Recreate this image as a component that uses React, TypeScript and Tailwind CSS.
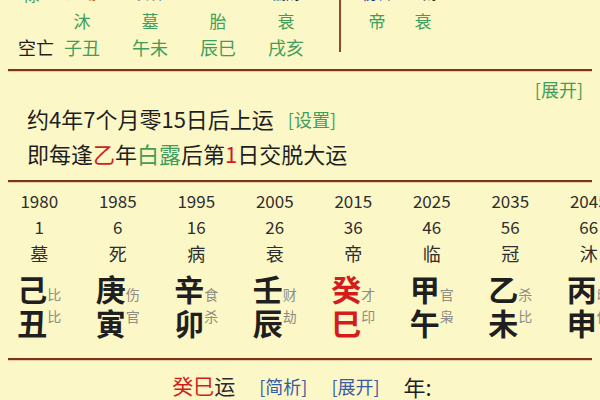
import React from "react";

// ─── Data ─────────────────────────────────────────────────────────────────────

type TopCol = { god: string; godColor: string; star: string; kong: string };

const leftCols: TopCol[] = [
  { god: "比劫", godColor: "text-[#c8782a]", star: "沐", kong: "子丑" },
  { god: "食神", godColor: "text-[#2b3f9e]", star: "墓", kong: "午未" },
  { god: "", godColor: "", star: "胎", kong: "辰巳" },
  { god: "偏财", godColor: "text-[#2a2a2a]", star: "衰", kong: "戌亥" },
];

const rightCols = [
  { god: "伤官", godColor: "text-[#2b3f9e]", star: "帝" },
  { god: "正财", godColor: "text-[#2a2a2a]", star: "衰" },
];

type Luck = {
  year: string;
  age: string;
  stage: string;
  stem: string;
  branch: string;
  stemGod: string;
  branchGod: string;
  hot?: boolean;
};

const lucks: Luck[] = [
  { year: "1980", age: "1", stage: "墓", stem: "己", branch: "丑", stemGod: "比", branchGod: "比" },
  { year: "1985", age: "6", stage: "死", stem: "庚", branch: "寅", stemGod: "伤", branchGod: "官" },
  { year: "1995", age: "16", stage: "病", stem: "辛", branch: "卯", stemGod: "食", branchGod: "杀" },
  { year: "2005", age: "26", stage: "衰", stem: "壬", branch: "辰", stemGod: "财", branchGod: "劫" },
  { year: "2015", age: "36", stage: "帝", stem: "癸", branch: "巳", stemGod: "才", branchGod: "印", hot: true },
  { year: "2025", age: "46", stage: "临", stem: "甲", branch: "午", stemGod: "官", branchGod: "枭" },
  { year: "2035", age: "56", stage: "冠", stem: "乙", branch: "未", stemGod: "杀", branchGod: "比" },
  { year: "2045", age: "66", stage: "沐", stem: "丙", branch: "申", stemGod: "印", branchGod: "伤" },
];

// ─── Sub-components ──────────────────────────────────────────────────────────

function Rule() {
  return <div className="mx-[8px] h-[2px] bg-[#7e3419] shadow-[0_1px_0_rgba(200,120,80,0.35)]" />;
}

function LuckCol({ l }: { l: Luck }) {
  const big = l.hot ? "text-[#d41c1c]" : "text-[#1f1f1f]";
  return (
    <div className="flex flex-col items-center text-[#2e2e2e]">
      <div className="h-[26px] flex items-center text-[17px]">{l.year}</div>
      <div className="h-[26px] flex items-center text-[17px]">{l.age}</div>
      <div className="h-[26px] flex items-center text-[18px]">{l.stage}</div>
      <div className="mt-[4px] h-[34px] flex items-end">
        <span className={`text-[30px] font-bold leading-[32px] ${big}`}>{l.stem}</span>
        <span className="text-[14px] leading-[14px] text-[#8d8d86] mb-[3px]">{l.stemGod}</span>
      </div>
      <div className="h-[34px] flex items-start">
        <span className={`text-[30px] font-bold leading-[32px] mt-[2px] ${big}`}>{l.branch}</span>
        <span className="text-[14px] leading-[14px] text-[#8d8d86] mt-[5px]">{l.branchGod}</span>
      </div>
    </div>
  );
}

// ─── Main component ───────────────────────────────────────────────────────────

export default function App() {
  return (
    <div className="relative w-[600px] h-[400px] overflow-hidden bg-[#fcf7c6] font-['Noto_Sans_CJK_SC','Noto_Sans',sans-serif]">

      {/* ── 星运 / 空亡 ── */}
      <div className="mt-[-22px] flex">
        <div className="w-[48px] flex flex-col">
          <div className="h-[31px] flex items-center justify-center pl-[14px] text-[17px] text-[#3f9e5b]">禄</div>
          <div className="h-[24px]" />
          <div className="h-[28px] flex items-center pl-[18px] whitespace-nowrap text-[18px] text-[#1f1f1f]">空亡</div>
        </div>
        {leftCols.map((c, i) => (
          <div key={i} className="w-[68px] flex flex-col items-center">
            <div className={`h-[31px] flex items-center text-[15px] ${c.godColor}`}>{c.god}</div>
            <div className="h-[24px] flex items-center text-[17px] text-[#3f9e5b]">{c.star}</div>
            <div className="h-[28px] flex items-center text-[18px] text-[#3f9e5b]">{c.kong}</div>
          </div>
        ))}
        <div className="ml-[19px] w-[2px] h-[74px] bg-[#8c4a2c]" />
        <div className="ml-[13px] flex">
          {rightCols.map((c, i) => (
            <div key={i} className="w-[46px] flex flex-col items-center">
              <div className={`h-[31px] flex items-center text-[15px] ${c.godColor}`}>{c.god}</div>
              <div className="h-[24px] flex items-center text-[17px] text-[#3f9e5b]">{c.star}</div>
            </div>
          ))}
        </div>
      </div>

      <div className="mt-[8px]"><Rule /></div>

      {/* ── 起运 ── */}
      <div className="h-[36px] flex items-center justify-end pr-[17px] text-[18px] text-[#3f9e5b]">[展开]</div>
      <div className="h-[22px] flex items-center pl-[27px] text-[22px] text-[#1f1f1f] whitespace-nowrap">
        约4年7个月零15日后上运
        <span className="ml-[14px] text-[18px] text-[#3f9e5b] mt-[2px]">[设置]</span>
      </div>
      <div className="mt-[13px] h-[22px] flex items-center pl-[27px] text-[22px] text-[#1f1f1f] whitespace-nowrap">
        即每逢<span className="text-[#d41c1c]">乙</span>年<span className="text-[#3f9e5b]">白露</span>后第<span className="text-[#d41c1c]">1</span>日交脱大运
      </div>

      <div className="mt-[16px]"><Rule /></div>

      {/* ── 大运 ── */}
      <div className="pt-[6px] w-[628px] grid grid-cols-8">
        {lucks.map((l) => <LuckCol key={l.year} l={l} />)}
      </div>

      <div className="mt-[20px]"><Rule /></div>

      {/* ── 流年 ── */}
      <div className="mt-[11px] h-[30px] flex items-center justify-center gap-[24px] pl-[4px] whitespace-nowrap">
        <span className="text-[21px] text-[#2a2a2a]"><span className="text-[#d41c1c]">癸巳</span>运</span>
        <span className="text-[18px] text-[#3a5ca5]">[简析]</span>
        <span className="text-[18px] text-[#3a5ca5]">[展开]</span>
        <span className="text-[22px] text-[#1f1f1f]">年:</span>
      </div>

    </div>
  );
}
